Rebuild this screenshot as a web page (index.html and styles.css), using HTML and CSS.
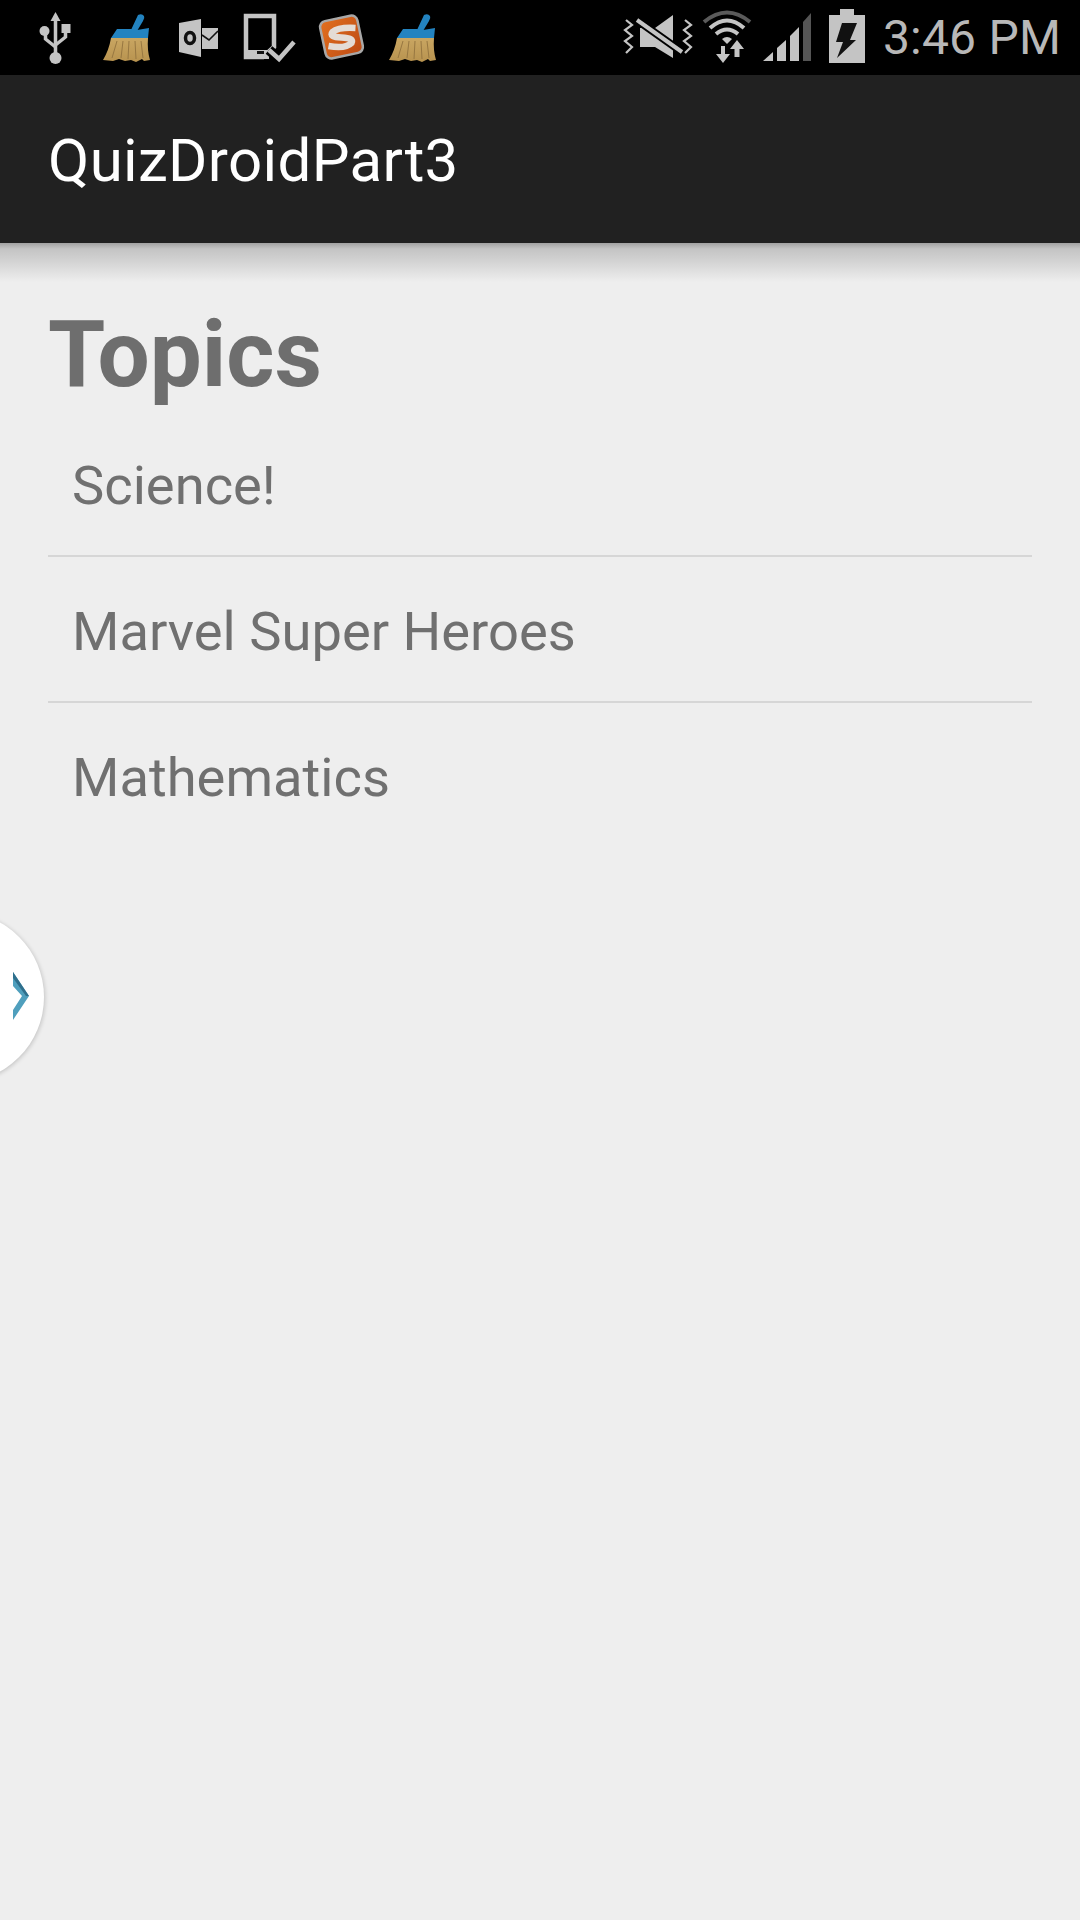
FILE: index.html
```html
<!DOCTYPE html>
<html lang="en">
<head>
  <meta charset="UTF-8">
  <meta name="viewport" content="width=device-width, initial-scale=1.0">
  <title>QuizDroidPart3</title>
  <link rel="stylesheet" href="styles.css">
</head>
<body>
  <svg class="defs" width="0" height="0">
    <defs>
      <linearGradient id="bristle" x1="0" y1="0" x2="0" y2="1">
        <stop offset="0" stop-color="#c9a662"/>
        <stop offset="1" stop-color="#b8934f"/>
      </linearGradient>
      <linearGradient id="sogou" x1="0" y1="0" x2="1" y2="1">
        <stop offset="0" stop-color="#e2701f"/>
        <stop offset="1" stop-color="#bd4a14"/>
      </linearGradient>
      <g id="broom">
        <path d="M137 15 Q141 13 143 16 Q144 18 142 21 L136 31 L130 30 Z" fill="#2383c0"/>
        <path d="M116 29 L130 29 L136 30 L148 28 L147 38 L110 38 Z" fill="#2383c0"/>
        <path d="M110 38 L147 38 Q146 50 149 60 L143 61 L141 59 L135 62 L130 60 L124 61 L118 59 L112 61 L102 60 Q108 50 110 38 Z" fill="url(#bristle)"/>
        <path d="M116 41 L111 58 M122 41 L120 58 M128 41 L127 59 M134 41 L135 59 M140 41 L142 58" fill="none" stroke="#977741" stroke-width="1"/>
      </g>
    </defs>
  </svg>

  <div class="status-bar">
    <div class="status-left">
      <!-- usb -->
      <svg class="slot" viewBox="19.5 0 71.5 75">
        <g fill="none" stroke="#c4c4c4" stroke-width="3.5">
          <path d="M55 20 V55"/>
          <path d="M45 31 V39 L55 47"/>
          <path d="M65 31 V37 L55 45"/>
        </g>
        <g fill="#c4c4c4">
          <path d="M55 12 L60 21 H50 Z"/>
          <circle cx="44" cy="31" r="5"/>
          <rect x="61" y="24" width="9" height="9"/>
          <circle cx="55" cy="58" r="6"/>
        </g>
      </svg>
      <!-- cleaner -->
      <svg class="slot" viewBox="90 0 71.5 75"><use href="#broom"/></svg>
      <!-- outlook -->
      <svg class="slot" viewBox="164 0 71.5 75">
        <path d="M180 23 L202 19 V57 L180 52 Z" fill="#c4c4c4"/>
        <ellipse cx="191" cy="38" rx="4.5" ry="5.5" fill="none" stroke="#111" stroke-width="3.5"/>
        <rect x="203" y="28" width="16" height="21" fill="#c4c4c4"/>
        <path d="M203 35 L210 40 L219 31" fill="none" stroke="#111" stroke-width="1.6"/>
      </svg>
      <!-- tablet with check -->
      <svg class="slot" viewBox="235 0 71.5 75">
        <path d="M247 16 H275 V47 L264 57 H247 Z" fill="none" stroke="#c4c4c4" stroke-width="4.5"/>
        <rect x="245" y="50" width="25" height="9" fill="#c4c4c4"/>
        <rect x="258" y="51" width="7" height="3" fill="#111"/>
        <path d="M270 50 L280 59 L295 42" fill="none" stroke="#000" stroke-width="10"/>
        <path d="M270 50 L280 59 L295 42" fill="none" stroke="#c4c4c4" stroke-width="4.5"/>
      </svg>
      <!-- sogou -->
      <svg class="slot" viewBox="306.5 0 71.5 75">
        <rect x="323" y="18" width="38" height="38" rx="6" transform="rotate(-12 342 37)" fill="url(#sogou)" stroke="#a8a8a8" stroke-width="2.5"/>
        <path d="M356 28 Q339 27 333 32 Q329 37 342 37.5 Q355 38 352 43 Q346 49 329 46" fill="none" stroke="#e4dcd6" stroke-width="6.5"/>
      </svg>
      <!-- cleaner again -->
      <svg class="slot" viewBox="90 0 71.5 75"><use href="#broom"/></svg>
    </div>

    <div class="status-right">
      <!-- muted -->
      <svg class="sys-mute" viewBox="622 0 72 75">
        <path d="M640 28 H655 L673 15 V58 L655 47 H640 Z" fill="#c4c4c4"/>
        <path d="M637 20 L682 52" stroke="#000" stroke-width="8"/>
        <path d="M637 20 L682 52" stroke="#c4c4c4" stroke-width="4"/>
        <path d="M626 20 L632 25 L625 30 L632 36 L625 41 L632 47 L626 53" fill="none" stroke="#c4c4c4" stroke-width="2.2"/>
        <path d="M685 20 L691 25 L684 30 L691 36 L684 41 L691 47 L685 53" fill="none" stroke="#c4c4c4" stroke-width="2.2"/>
      </svg>
      <!-- wifi -->
      <svg class="sys-wifi" viewBox="702 0 50 75">
        <path d="M704 22 Q727 3 750 22" fill="none" stroke="#5a5a5a" stroke-width="4"/>
        <path d="M710 28 Q727 13 744 28" fill="none" stroke="#c4c4c4" stroke-width="4"/>
        <path d="M716 34 Q727 25 738 34" fill="none" stroke="#c4c4c4" stroke-width="4"/>
        <path d="M722 39 Q727 35 732 39 L727 44 Z" fill="#c4c4c4"/>
        <path d="M721 46 H725 V54 H730 L723 63 L716 54 H721 Z" fill="#c4c4c4"/>
        <path d="M737 40 L744 49 H739.5 V57 H734.5 V49 H730 Z" fill="#c4c4c4"/>
      </svg>
      <!-- signal -->
      <svg class="sys-signal" viewBox="763 0 49 75">
        <path d="M763 61 L773 52 V61 Z" fill="#c4c4c4"/>
        <path d="M777 48 L786 40 V61 H777 Z" fill="#c4c4c4"/>
        <path d="M790 36 L799 27 V61 H790 Z" fill="#c4c4c4"/>
        <path d="M803 22 L811 13 V61 H803 Z" fill="#555"/>
      </svg>
      <!-- battery -->
      <svg class="sys-battery" viewBox="829 0 36 75">
        <path d="M840 9 H854 V15 H865 V63 H829 V15 H840 Z" fill="#c4c4c4"/>
        <path d="M842 23 H857 L850 40 H856 L837 58 L843 42 H836 Z" fill="#111"/>
      </svg>
      <span class="clock">3:46 PM</span>
    </div>
  </div>

  <header class="action-bar">QuizDroidPart3</header>
  <div class="action-shadow"></div>

  <main class="content">
    <h1 class="heading">Topics</h1>
    <ul class="topics">
      <li>Science!</li>
      <li>Marvel Super Heroes</li>
      <li>Mathematics</li>
    </ul>
  </main>

  <!-- floating side handle -->
  <div class="side-handle">
    <svg viewBox="0 0 20 50" width="20" height="50">
      <path d="M0 1 L16 25 L0 49 V39 L9 25 L0 15 Z" fill="#4f9fbd"/>
      <path d="M0 1 L16 25 L13 25 L0 7 Z" fill="#2f6f8c"/>
    </svg>
  </div>
</body>
</html>
```

FILE: styles.css
```css
* {
  box-sizing: border-box;
}
html, body {
  margin: 0;
  padding: 0;
}
body {
  width: 1080px;
  height: 1920px;
  position: relative;
  overflow: hidden;
  background-color: #eeeeee;
  font-family: Roboto, "Liberation Sans", sans-serif;
}
.defs {
  position: absolute;
}
.status-bar {
  height: 75px;
  background-color: #000;
  display: flex;
  justify-content: space-between;
}
.status-left {
  display: flex;
  padding-left: 19.5px;
}
.slot {
  width: 71.5px;
  height: 75px;
}
.status-right {
  display: flex;
  align-items: flex-start;
  padding-right: 19px;
}
.sys-mute {
  width: 72px;
  height: 75px;
}
.sys-wifi {
  width: 50px;
  height: 75px;
  margin-left: 8px;
}
.sys-signal {
  width: 49px;
  height: 75px;
  margin-left: 11px;
}
.sys-battery {
  width: 36px;
  height: 75px;
  margin-left: 17px;
}
.clock {
  margin-left: 18px;
  font-size: 48px;
  letter-spacing: 0.2px;
  line-height: 75px;
  color: #b8b8b8;
  white-space: nowrap;
}
.action-bar {
  height: 168px;
  padding-left: 48px;
  background-color: #212121;
  color: #fff;
  font-size: 60px;
  letter-spacing: 0.35px;
  line-height: 172px;
}
.action-shadow {
  height: 39px;
  background: linear-gradient(#a2a2a2, #c4c4c4 15%, #d2d2d2 45%, #eeeeee);
}
.content {
  padding: 0 48px;
}
.heading {
  margin: 0;
  height: 129px;
  padding-top: 17px;
  font-size: 92.5px;
  font-weight: 700;
  line-height: 112px;
  color: #6e6e6e;
}
.topics {
  list-style: none;
  margin: 0;
  padding: 0;
}
.topics li {
  height: 146px;
  padding-left: 24px;
  font-size: 54.3px;
  line-height: 150px;
  color: #707070;
  border-bottom: 2px solid #d6d6d6;
}
.topics li:last-child {
  border-bottom: none;
}
.side-handle {
  position: absolute;
  left: -126px;
  top: 912px;
  width: 170px;
  height: 170px;
  border-radius: 50%;
  background-color: #fff;
  box-shadow: 1px 1px 4px rgba(0, 0, 0, 0.18);
}
.side-handle svg {
  position: absolute;
  left: 139px;
  top: 59px;
}
```
